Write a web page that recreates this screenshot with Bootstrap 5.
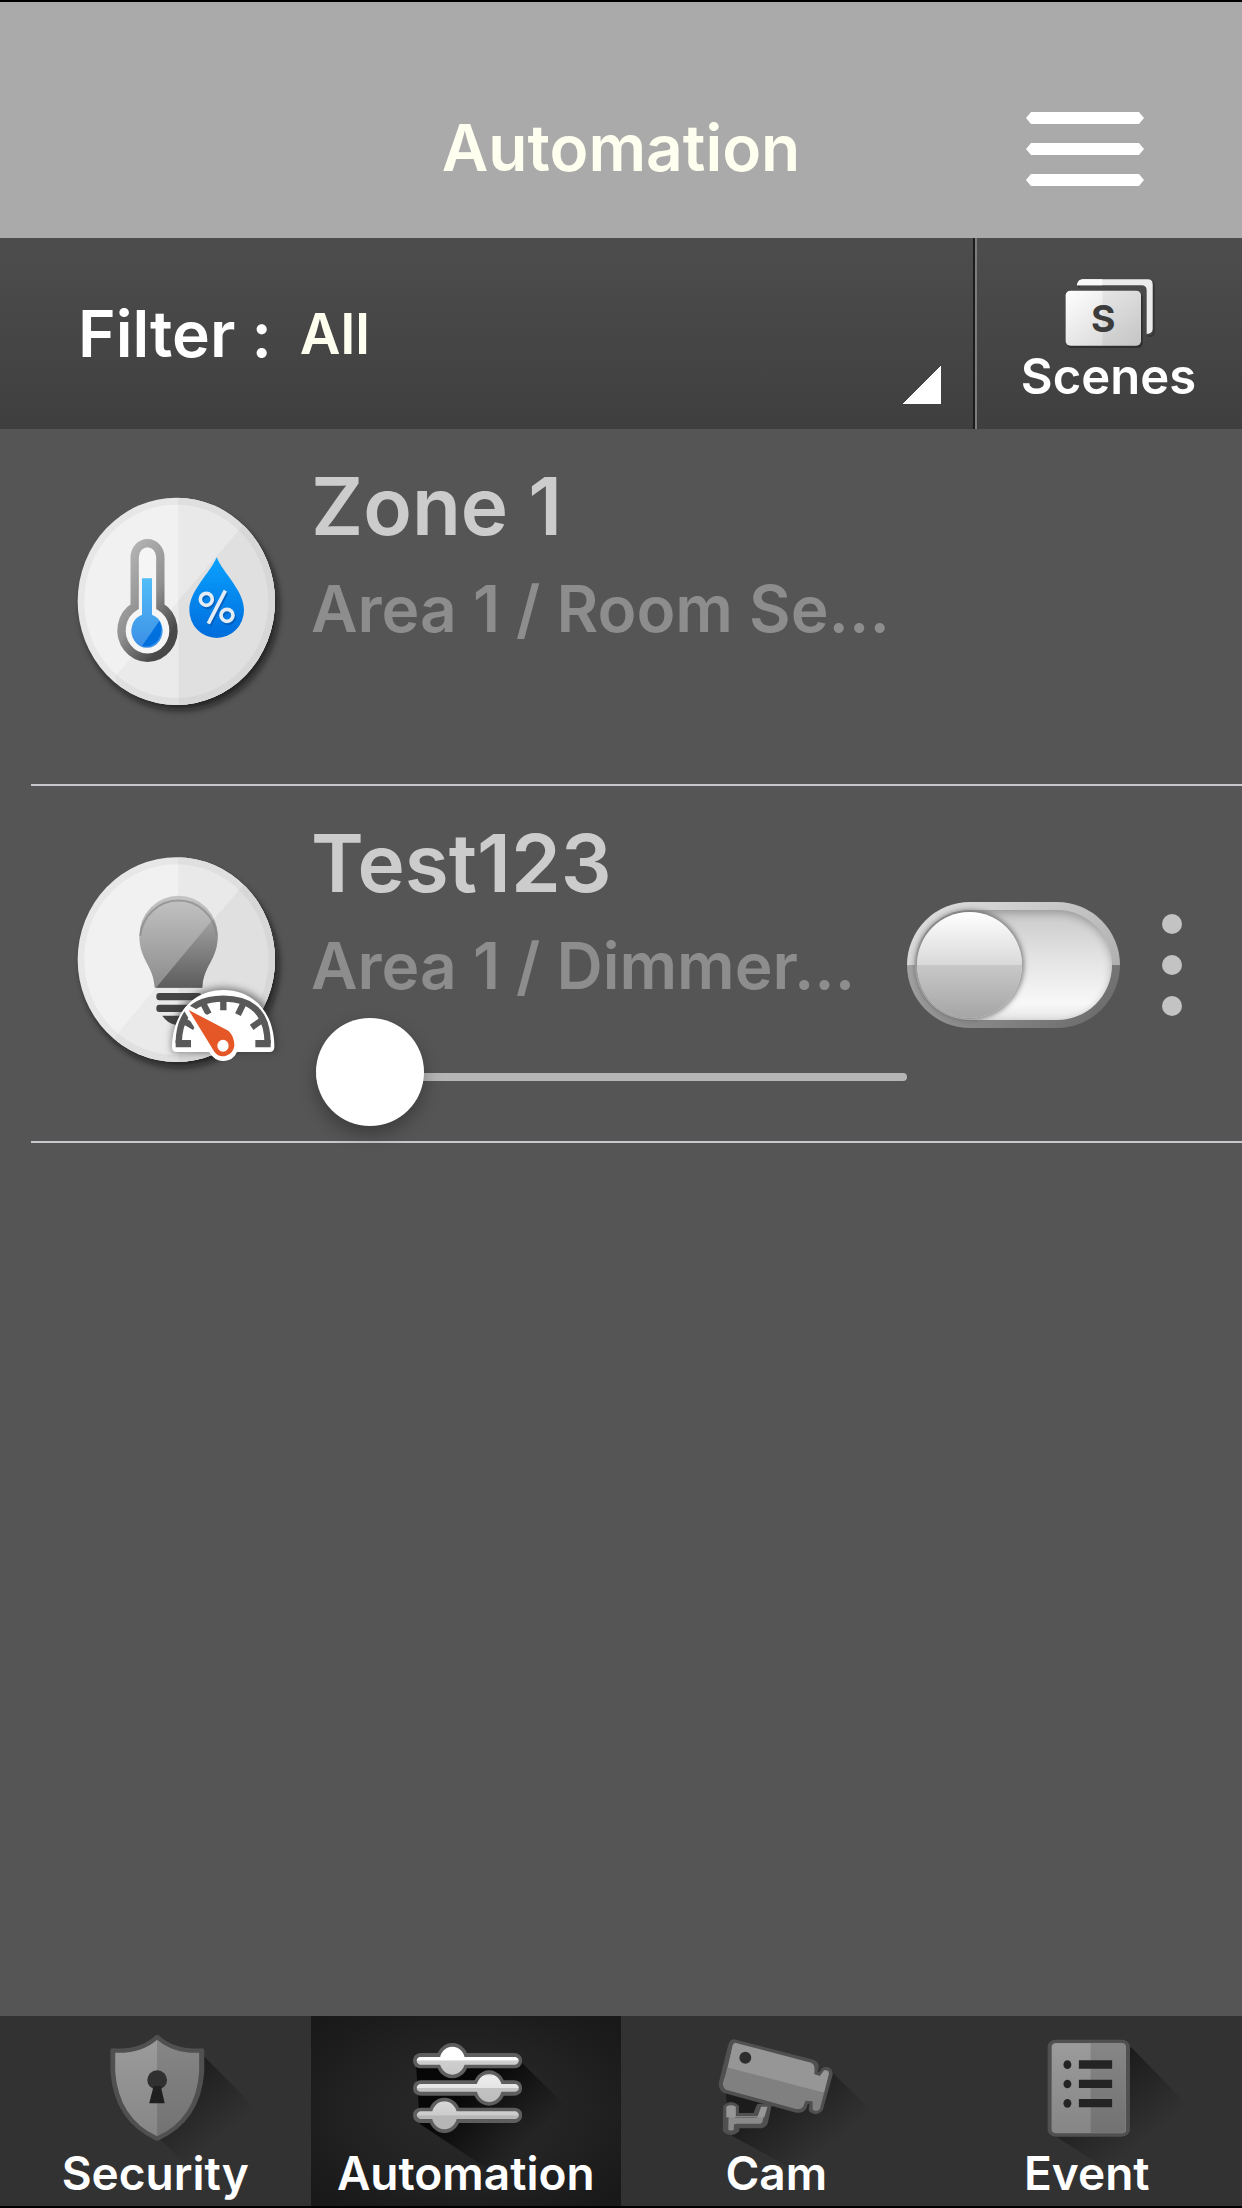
<!DOCTYPE html>
<html lang="en">
<head>
<meta charset="utf-8">
<meta name="viewport" content="width=device-width, initial-scale=1">
<title>Automation</title>
<link href="https://cdn.jsdelivr.net/npm/bootstrap@5.3.0/dist/css/bootstrap.min.css" rel="stylesheet">
<style>
  body { background: #555; font-family: Inter, "Liberation Sans", sans-serif; border-top: 2px solid #000; border-bottom: 2px solid #000; }
  svg { display: block; flex: none; }

  .app-header { background: #aaa; padding: 108px 0 52px; }
  .app-title { font-size: 64px; line-height: 76px; font-weight: 600; color: #fffff0; }
  .menu-btn { margin-right: 98px; }

  .filter-bar { height: 191px; background: linear-gradient(#4d4d4d, #3f3f3f); }
  .filter-label { font-size: 64px; line-height: 76px; font-weight: 600; color: #fff; padding-left: 78px; white-space: pre; }
  .filter-select, .filter-select:focus {
    font-size: 56px; line-height: 76px; font-weight: 600; color: #fffff0;
    border: 0; border-radius: 0; height: 100%; padding: 0 90px 0 28px; box-shadow: none;
    background: linear-gradient(to bottom right, transparent 50%, #fff 50%) no-repeat right 32px bottom 25px / 38px 38px;
  }
  .filter-select option { color: #222; font-size: 24px; }
  .scenes-link { width: 269px; border-left: 2px solid #1c1c1c; box-shadow: inset 2px 0 #7d7d7d; padding-top: 38px; font-size: 49px; line-height: 56px; font-weight: 600; color: #fff; }

  .device { margin-left: 31px; padding-left: 29px; height: 357px; border-bottom: 2px solid #c8c7cc; }
  .device-icon { margin-top: 41px; }
  .device-text { padding: 29px 0 0 11px; min-width: 0; }
  .device-name { font-size: 80px; line-height: 96px; font-weight: 600; color: #ccc; margin-bottom: 17px; }
  .device-place { font-size: 64px; line-height: 76px; font-weight: 600; color: #8d8d8d; white-space: nowrap; }

  .dimmer { height: 118px; margin: 14px 0 0 5px; width: calc(100% - 5px); padding: 0; }
  .dimmer::-webkit-slider-runnable-track { height: 8px; border-radius: 4px; background: #b5b5b5; }
  .dimmer::-webkit-slider-thumb { width: 108px; height: 108px; margin-top: -55px; border-radius: 50%; background: #fff; box-shadow: 0 8px 18px rgba(0,0,0,.3); }

  .power {
    appearance: none; flex: none; width: 213px; height: 126px; margin: 0;
    border: 8px solid transparent; border-radius: 63px; display: flex; align-items: center; padding-left: 2px;
    background:
      linear-gradient(#c9c9c9, #e4e4e4 45%, #f8f8f8 85%, #e6e6e6) padding-box,
      linear-gradient(90deg, rgba(255,255,255,.25), rgba(0,0,0,.12)) border-box,
      linear-gradient(#d8d8d8, #c8c8c8 50%, #858585 50%, #747474) border-box;
    box-shadow: inset 0 3px 9px rgba(0,0,0,.25);
  }
  .power::before { content: ""; width: 105px; height: 106px; border-radius: 50%;
    background: linear-gradient(#fff, #d9d9d9 50%, #c8c8c8 50%, #a5a5a5); box-shadow: 0 0 5px 2px rgba(90,90,90,.7); }
  .power:checked { justify-content: flex-end; }
  .device-actions { padding-top: 2px; }
  .more-btn { width: 104px; margin-right: 18px; }

  .tab-item { flex: 1 1 0; min-width: 0; background: #323232; color: #fff; font-size: 46px; line-height: 48px; font-weight: 600; padding-bottom: 9px; overflow: hidden; }
  .tab-item.active { background: radial-gradient(closest-side, #292929, #242424 60%, #191919 130%); }
</style>
</head>
<body class="d-flex flex-column min-vh-100">

<header class="app-header d-flex align-items-center">
  <div class="col"></div>
  <h1 class="app-title m-0">Automation</h1>
  <div class="col d-flex justify-content-end">
    <button type="button" class="menu-btn btn p-0 border-0" aria-label="Menu">
      <svg width="118" height="76" viewBox="0 0 118 76" fill="#fff">
        <path d="M5 2H113L118 8 113 14H5L0 8ZM5 33H113L118 39 113 45H5L0 39ZM5 64H113L118 70 113 76H5L0 70Z"/>
      </svg>
    </button>
  </div>
</header>

<div class="filter-bar d-flex">
  <div class="d-flex flex-grow-1 align-items-center">
    <label class="filter-label" for="filter">Filter :</label>
    <select id="filter" class="filter-select form-select flex-grow-1">
      <option>All</option><option>Area 1</option>
    </select>
  </div>
  <a href="#scenes" class="scenes-link d-flex flex-column align-items-center text-decoration-none">
    <svg width="96" height="73" viewBox="246 108 288 219">
      <defs>
        <linearGradient id="sc" x1="0" y1="0" x2="1" y2="1"><stop offset="0" stop-color="#fff"/><stop offset="1" stop-color="#cfcfcf"/></linearGradient>
      </defs>
      <path d="M300 144V138Q300 124 312 124H512Q525 124 525 136V276Q525 288 512 288H505" fill="none" stroke="#222" stroke-opacity=".4" stroke-width="6"/>
      <path d="M294 136Q296 118 312 118H506Q521 118 521 133V266Q521 280 503 282V151Q503 136 487 136Z" fill="#ebebeb"/>
      <path d="M294 136Q296 118 312 118H370V136Z" fill="#fafafa"/>
      <rect x="264" y="158" width="227" height="166" rx="14" fill="#1d1d1d" opacity=".55"/>
      <rect x="260" y="152" width="226" height="165" rx="14" fill="url(#sc)"/>
      <path d="M370 152H472Q486 152 486 166V303Q486 317 472 317H370Z" fill="#000" opacity=".05"/>
      <text x="373" y="277" text-anchor="middle" font-family="Inter, sans-serif" font-size="112" font-weight="700" fill="#3c3c3c">S</text>
    </svg>
    <span>Scenes</span>
  </a>
</div>

<main class="flex-grow-1">
  <section class="device d-flex">
    <svg class="device-icon" width="240" height="260" viewBox="0 0 720 780" aria-hidden="true">
      <defs>
        <filter id="soft" x="-20%" y="-20%" width="150%" height="150%"><feGaussianBlur stdDeviation="11"/></filter>
        <clipPath id="disc"><ellipse cx="349" cy="394" rx="296" ry="311"/></clipPath>
        <linearGradient id="tube" x1="0" y1="0" x2=".6" y2="1"><stop offset="0" stop-color="#bbb"/><stop offset=".6" stop-color="#909090"/><stop offset="1" stop-color="#484848"/></linearGradient>
        <linearGradient id="drop" x1="0" y1="0" x2="0" y2="1"><stop offset="0" stop-color="#0aa2ff"/><stop offset="1" stop-color="#006cdc"/></linearGradient>
        <linearGradient id="fluid" x1="0" y1="0" x2="0" y2="1"><stop offset="0" stop-color="#52bdf8"/><stop offset="1" stop-color="#3c8fe6"/></linearGradient>
      </defs>
      <ellipse cx="360" cy="412" rx="296" ry="308" fill="#111" opacity=".7" filter="url(#soft)"/>
      <g clip-path="url(#disc)">
        <rect width="720" height="780" fill="#f1f1f1"/>
        <path d="M355 0H720V780H355Z" fill="#e9e9e9"/>
        <path d="M545 170L355 392V780H720V0Z" fill="#e0e0e0"/>
        <path d="M355 392L165 620 200 720H355Z" fill="#eaeaea"/>
        <ellipse cx="349" cy="394" rx="287" ry="301" fill="none" stroke="#000" stroke-opacity=".04" stroke-width="22"/>
      </g>
      <path d="M224 410V262A38 42 0 0 1 301 262V410A78 82 0 1 1 224 410Z" fill="#f5f5f5" stroke="url(#tube)" stroke-width="25"/>
      <path d="M246 325H276V434A47 51 0 1 1 246 434Z" fill="url(#fluid)"/>
      <path d="M298 453A47 51 0 0 1 246 528Z" fill="#0070de"/>
      <path d="M470 262C490 310 552 362 552 420A82 84 0 0 1 388 420C388 362 450 310 470 262Z" fill="url(#drop)"/>
      <g fill="none" stroke-width="11">
        <g stroke="#0450a8" opacity=".6" transform="translate(4 6)"><circle cx="439" cy="388" r="18"/><circle cx="501" cy="436" r="18"/><path d="M496 362L445 461"/></g>
        <g stroke="#e4ecf5"><circle cx="439" cy="388" r="18"/><circle cx="501" cy="436" r="18"/><path d="M496 362L445 461"/></g>
      </g>
    </svg>
    <div class="device-text flex-grow-1">
      <h2 class="device-name">Zone 1</h2>
      <div class="device-place">Area 1 / Room Se...</div>
    </div>
  </section>

  <section class="device d-flex">
    <svg class="device-icon" width="240" height="260" viewBox="0 -9 720 780" aria-hidden="true">
      <defs>
        <clipPath id="disc2"><ellipse cx="349" cy="389" rx="296" ry="307"/></clipPath>
        <linearGradient id="bulb" x1="0" y1="0" x2="0" y2="1"><stop offset="0" stop-color="#c4c4c4"/><stop offset="1" stop-color="#8c8c8c"/></linearGradient>
        <linearGradient id="bulbDark" x1="0" y1="0" x2="0" y2="1"><stop offset="0" stop-color="#a2a2a2"/><stop offset="1" stop-color="#5c5c5c"/></linearGradient>
      </defs>
      <ellipse cx="360" cy="407" rx="296" ry="304" fill="#111" opacity=".7" filter="url(#soft)"/>
      <g clip-path="url(#disc2)">
        <rect width="720" height="780" fill="#f1f1f1"/>
        <path d="M355 0H720V780H355Z" fill="#e9e9e9"/>
        <path d="M545 170L355 392V780H720V0Z" fill="#e0e0e0"/>
        <path d="M355 392L165 620 200 720H355Z" fill="#eaeaea"/>
        <ellipse cx="349" cy="389" rx="287" ry="297" fill="none" stroke="#000" stroke-opacity=".04" stroke-width="22"/>
      </g>
      <path d="M284 473C280 405 238 390 238 317A117 119 0 0 1 473 317C473 390 430 405 427 473Z" fill="url(#bulb)"/>
      <path d="M460 266Q473 290 473 317C473 390 430 405 427 473H288Z" fill="url(#bulbDark)"/>
      <path d="M241 317A115 116 0 0 1 470 317" fill="none" stroke="#888" stroke-width="6" opacity=".7"/>
      <rect x="289" y="489" width="135" height="22" rx="9" fill="#444"/>
      <rect x="289" y="524" width="135" height="22" rx="9" fill="#444"/>
      <path d="M307 557H403Q385 582 345 584Q320 578 307 557Z" fill="#444"/>
      <path d="M336 668Q325 480 490 472Q660 480 650 668Z" fill="#333" opacity=".55" filter="url(#soft)"/>
      <path d="M490 480C590 480 644 560 643 650Q643 666 628 666H530Q520 692 490 693Q462 692 450 668L447 666H350Q336 666 336 650C337 560 392 480 490 480Z" fill="#fff"/>
      <path d="M356 640Q358 507 490 506Q622 507 623 640" fill="none" stroke="#595959" stroke-width="19"/>
      <path d="M347 641H393M632 641H586" stroke="#595959" stroke-width="22"/>
      <path d="M490 500V541M550 521L534 554M602 573L575 592M430 521L446 552M372 573L404 592" stroke="#595959" stroke-width="19"/>
      <path d="M386 540L505 602Q524 620 523 648A34 36 0 0 1 463 665Z" fill="#e55727" stroke="#fff" stroke-width="26" stroke-linejoin="round"/>
      <path d="M386 540L505 602Q524 620 523 648A34 36 0 0 1 463 665Z" fill="#e55727"/>
      <ellipse cx="489" cy="647" rx="17" ry="18" fill="#fff"/>
    </svg>
    <div class="device-text flex-grow-1">
      <h2 class="device-name">Test123</h2>
      <div class="device-place">Area 1 / Dimmer...</div>
      <input type="range" class="dimmer form-range" min="0" max="100" value="0" aria-label="Test123 brightness">
    </div>
    <div class="device-actions d-flex align-items-center">
      <input type="checkbox" role="switch" class="power" aria-label="Test123 power">
      <button type="button" class="more-btn btn p-0 border-0 d-flex justify-content-center" aria-label="More options">
        <svg width="20" height="102" viewBox="0 0 20 102" fill="#c3c3c3"><circle cx="10" cy="10" r="10"/><circle cx="10" cy="51" r="10"/><circle cx="10" cy="92" r="10"/></svg>
      </button>
    </div>
  </section>
</main>

<nav class="d-flex" aria-label="Main">
  <a href="#security" class="tab-item d-flex flex-column align-items-center text-decoration-none">
    <svg width="310" height="133" viewBox="0 48 783 399" preserveAspectRatio="none" overflow="visible">
      <defs>
        <linearGradient id="cast" gradientUnits="userSpaceOnUse" x1="430" y1="230" x2="580" y2="390"><stop offset="0" stop-color="#1c1c1c"/><stop offset="1" stop-color="#1c1c1c" stop-opacity="0"/></linearGradient>
        <linearGradient id="gl" x1="0" y1="0" x2="0" y2="1"><stop offset="0" stop-color="#9b9b9b"/><stop offset="1" stop-color="#868686"/></linearGradient>
        <linearGradient id="gd" x1="0" y1="0" x2="0" y2="1"><stop offset="0" stop-color="#868686"/><stop offset="1" stop-color="#727272"/></linearGradient>
      </defs>
      <path d="M512 165L700 390 560 590 400 415Z" fill="url(#cast)"/>
      <path d="M397 112Q440 158 509 152V215Q500 360 397 415Q295 360 286 215V152Q355 158 397 112Z" fill="#808080" stroke="#505050" stroke-width="14" stroke-linejoin="round"/>
      <path d="M397 119Q355 162 291 158V215Q300 355 397 409Z" fill="url(#gl)"/>
      <path d="M397 119Q440 162 503 158V215Q495 355 397 409Z" fill="url(#gd)"/>
      <ellipse cx="397" cy="240" rx="25" ry="29" fill="#303030"/>
      <path d="M388 258H406L416 310H377Z" fill="#1f1f1f"/>
    </svg>
    <span>Security</span>
  </a>
  <a href="#automation" class="tab-item active d-flex flex-column align-items-center text-decoration-none" aria-current="page">
    <svg width="310" height="133" viewBox="785 48 783 399" preserveAspectRatio="none" overflow="visible">
      <defs>
        <linearGradient id="cast2" gradientUnits="userSpaceOnUse" x1="1190" y1="250" x2="1360" y2="400"><stop offset="0" stop-color="#070707"/><stop offset="1" stop-color="#070707" stop-opacity="0"/></linearGradient>
        <linearGradient id="rod" gradientUnits="userSpaceOnUse" x1="0" y1="140" x2="0" y2="390"><stop offset="0" stop-color="#fff"/><stop offset=".16" stop-color="#fff"/><stop offset=".17" stop-color="#cfcfcf"/><stop offset=".34" stop-color="#c6c6c6"/><stop offset=".35" stop-color="#eee"/><stop offset=".49" stop-color="#e4e4e4"/><stop offset=".5" stop-color="#c2c2c2"/><stop offset=".66" stop-color="#bcbcbc"/><stop offset=".67" stop-color="#d6d6d6"/><stop offset=".82" stop-color="#ccc"/><stop offset=".83" stop-color="#b6b6b6"/><stop offset="1" stop-color="#b6b6b6"/></linearGradient>
      </defs>
      <path d="M1315 185L1520 425 1400 640 1060 372 1050 190Z" fill="url(#cast2)"/>
      <g fill="#5e5e5e">
        <rect x="1043" y="159" width="275" height="46" rx="20"/><rect x="1043" y="241" width="275" height="46" rx="20"/><rect x="1043" y="323" width="275" height="46" rx="20"/>
        <ellipse cx="1142" cy="182" rx="41" ry="53"/><ellipse cx="1235" cy="264" rx="41" ry="53"/><ellipse cx="1122" cy="346" rx="41" ry="53"/>
      </g>
      <g fill="url(#rod)">
        <path d="M1060 171H1302Q1310 175 1310 182T1302 194H1060Q1052 190 1052 182T1060 171ZM1060 252H1302Q1310 256 1310 264T1302 275H1060Q1052 272 1052 264T1060 252ZM1060 334H1302Q1310 338 1310 346T1302 357H1060Q1052 353 1052 346T1060 334Z"/>
        <path d="M1110 182a32 42 0 1 0 64 0a32 42 0 1 0-64 0ZM1203 264a32 42 0 1 0 64 0a32 42 0 1 0-64 0ZM1090 346a32 42 0 1 0 64 0a32 42 0 1 0-64 0Z"/>
      </g>
    </svg>
    <span>Automation</span>
  </a>
  <a href="#cam" class="tab-item d-flex flex-column align-items-center text-decoration-none">
    <svg width="310" height="133" viewBox="0 48 783 399" preserveAspectRatio="none" overflow="visible">
      <path d="M532 215L700 410 560 590 272 402 265 280Z" fill="url(#cast)"/>
      <g stroke-linejoin="round" fill="#8a8a8a">
        <path d="M286 124L482 184Q496 190 493 204L489 220L504 223L513 208Q528 204 529 222L504 328Q492 344 480 330L482 306L468 304L463 322Q456 336 440 331L262 273Q250 262 254 244L277 135Q280 124 286 124Z" stroke="#505050" stroke-width="12"/>
        <path d="M265 320Q277 306 291 320V346H340L349 318H373L364 368Q360 378 350 378H292V391Q278 407 264 391Z" stroke="#505050" stroke-width="14"/>
      </g>
      <path d="M288 128L480 188Q492 194 488 222L502 228 513 211Q526 208 525 222L513 278 270 203 282 136Z" fill="#969696"/>
      <path d="M270 203L513 278 502 328Q492 338 484 328V304L466 302 460 320Q454 330 440 326L265 269Q255 260 258 246Z" fill="#808080"/>
      <path d="M266 320Q277 312 290 320V349H345L354 320H370L362 352H266Z" fill="#979797"/>
      <ellipse cx="314" cy="173" rx="15" ry="18" fill="#2d2d2d"/>
    </svg>
    <span>Cam</span>
  </a>
  <a href="#event" class="tab-item d-flex flex-column align-items-center text-decoration-none">
    <svg width="310" height="133" viewBox="785 48 783 399" preserveAspectRatio="none" overflow="visible">
      <path d="M512 140L700 370 560 590 310 400Z" fill="url(#cast)" transform="translate(775 0)"/>
      <rect x="1082" y="124" width="198" height="281" rx="16" fill="#868686" stroke="#505050" stroke-width="10"/>
      <path d="M1186 130V398H1100Q1088 398 1088 384V144Q1088 130 1100 130Z" fill="url(#gl)"/>
      <path d="M1186 130V398H1262Q1274 398 1274 384V144Q1274 130 1262 130Z" fill="url(#gd)"/>
      <g fill="#242424"><ellipse cx="1127" cy="194" rx="10" ry="13"/><ellipse cx="1127" cy="252" rx="10" ry="13"/><ellipse cx="1127" cy="310" rx="10" ry="13"/>
      <path d="M1156 181h84v25h-84ZM1156 239h84v25h-84ZM1156 297h84v25h-84Z"/></g>
    </svg>
    <span>Event</span>
  </a>
</nav>

<script src="https://cdn.jsdelivr.net/npm/bootstrap@5.3.0/dist/js/bootstrap.bundle.min.js"></script>
</body>
</html>
